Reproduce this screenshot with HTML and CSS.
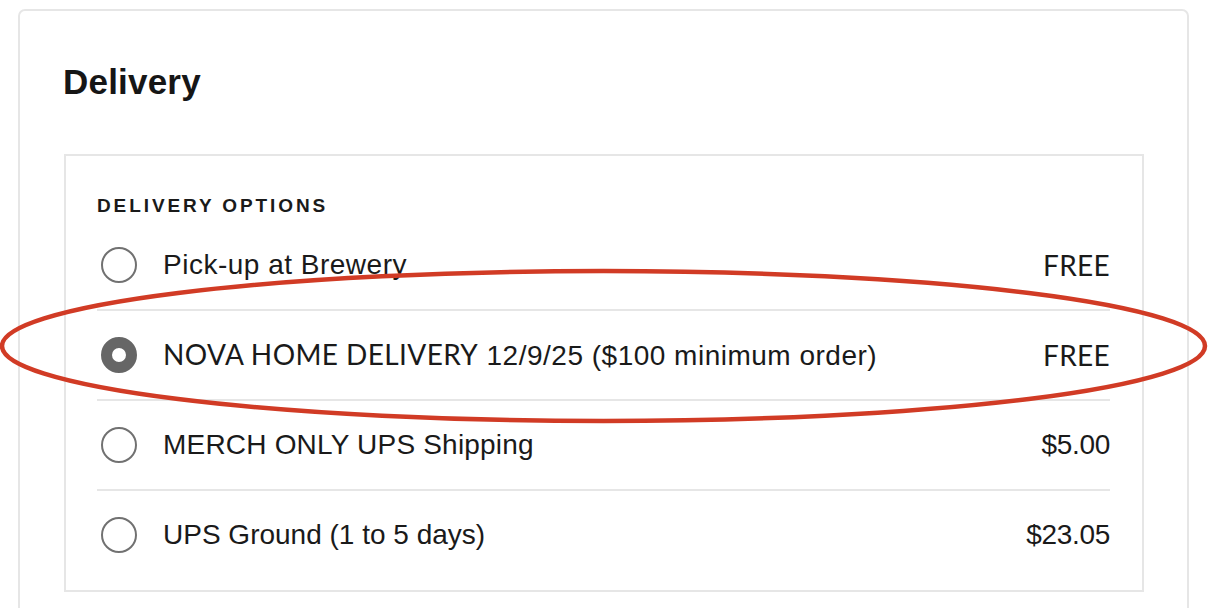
FILE: index.html
```html
<!DOCTYPE html>
<html lang="en">
<head>
<meta charset="utf-8">
<title>Delivery</title>
<link rel="stylesheet" href="styles.css">
</head>
<body>
<div class="page">
  <section class="card">
    <h2 class="card-title">Delivery</h2>
    <div class="options">
      <div class="options-label">DELIVERY OPTIONS</div>
      <label class="option">
        <span class="radio"></span>
        <span class="option-name">Pick-up at Brewery</span>
        <span class="option-price option-price-free">FREE</span>
      </label>
      <label class="option">
        <span class="radio radio-checked"></span>
        <span class="option-name"><span class="caps-run">NOVA HOME DELIVERY</span> 12/9/25 ($100 minimum order)</span>
        <span class="option-price option-price-free">FREE</span>
      </label>
      <label class="option">
        <span class="radio"></span>
        <span class="option-name option-name-caps">MERCH ONLY UPS Shipping</span>
        <span class="option-price">$5.00</span>
      </label>
      <label class="option option-last">
        <span class="radio"></span>
        <span class="option-name option-name-tight">UPS Ground (1 to 5 days)</span>
        <span class="option-price">$23.05</span>
      </label>
    </div>
  </section>
  <svg class="annotation" width="1218" height="608" viewBox="0 0 1218 608" aria-hidden="true">
    <ellipse cx="603.5" cy="346" rx="601.5" ry="75" fill="none" stroke="#d13b25" stroke-width="4.5"/>
  </svg>
</div>
</body>
</html>
```

FILE: styles.css
```css
html, body {
  margin: 0;
  padding: 0;
  overflow: hidden;
  background: #ffffff;
}

body {
  font-family: "Liberation Sans", Arial, Helvetica, sans-serif;
  color: #1a1a1a;
}

.page {
  position: relative;
  box-sizing: border-box;
  width: 1218px;
  height: 608px;
  padding: 9px 0 0 18px;
}

.card {
  box-sizing: border-box;
  width: 1171px;
  padding: 51px 44px 44px 44px;
  border: 2px solid #e6e6e6;
  border-radius: 7px;
  background: #fff;
}

.card-title {
  margin: 0 0 52px -1px;
  font-size: 35px;
  line-height: 40px;
  font-weight: 700;
  letter-spacing: 0.2px;
  color: #161616;
}

.options {
  box-sizing: border-box;
  width: 1080px;
  border: 2px solid #e6e6e6;
  padding: 38px 32px 11px 31px;
}

.options-label {
  font-size: 19px;
  line-height: 24px;
  font-weight: 700;
  letter-spacing: 2.9px;
  margin-bottom: 3px;
  color: #1a1a1a;
}

.option {
  display: flex;
  align-items: center;
  height: 88px;
  border-bottom: 2px solid #e6e6e6;
  font-size: 28px;
  line-height: 32px;
  letter-spacing: 0.5px;
}

.option-last {
  border-bottom: none;
}

.radio {
  box-sizing: border-box;
  flex: 0 0 36px;
  width: 36px;
  height: 36px;
  margin-left: 4px;
  margin-right: 26px;
  border: 2px solid #717171;
  border-radius: 50%;
  background: #fff;
}

.radio-checked {
  border: 11px solid #666666;
}

.option-name {
  flex: 1 1 auto;
}

.caps-run {
  font-family: Lato, "Liberation Sans", sans-serif;
  letter-spacing: 0.4px;
}

.option-name-caps {
  letter-spacing: 0.2px;
}

.option-name-tight {
  letter-spacing: 0;
}

.option-price {
  flex: 0 0 auto;
  text-align: right;
  letter-spacing: -0.3px;
}

.option-price-free {
  font-family: Lato, "Liberation Sans", sans-serif;
  letter-spacing: 0.3px;
}

.annotation {
  position: absolute;
  left: 0;
  top: 0;
  pointer-events: none;
}
```
